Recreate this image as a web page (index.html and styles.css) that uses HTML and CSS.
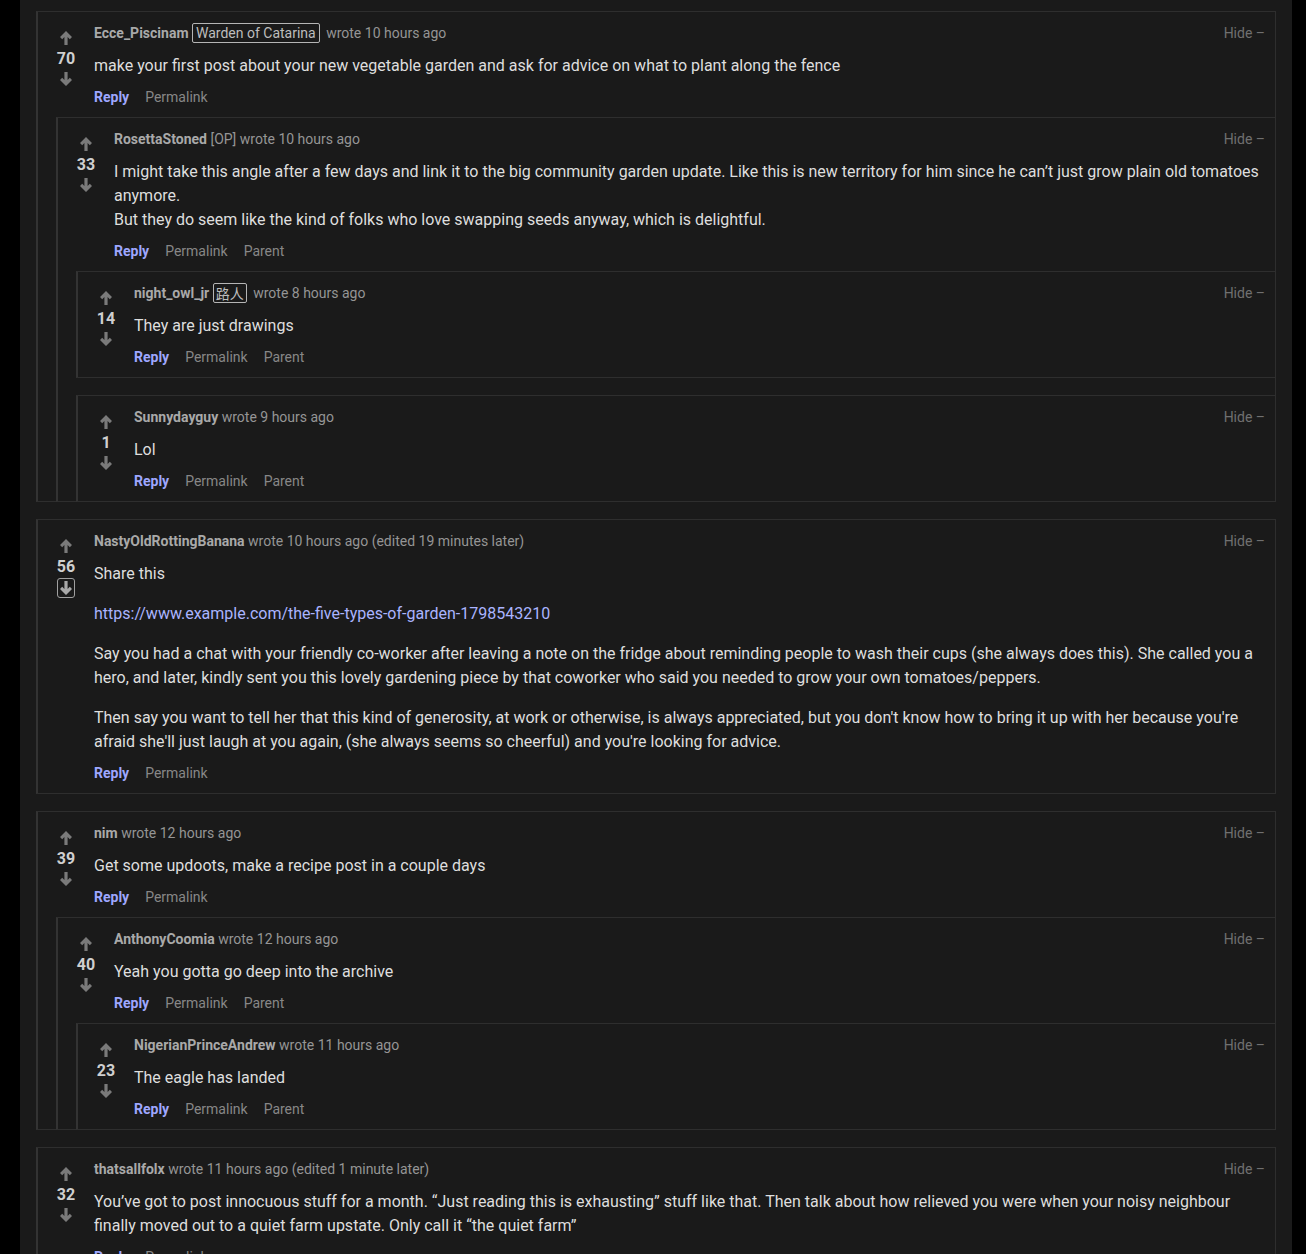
FILE: index.html
```html
<!DOCTYPE html>
<html lang="en">
<head>
<meta charset="utf-8">
<title>Comments</title>
<link rel="stylesheet" href="styles.css">
</head>
<body>
<main class="panel">

  <!-- thread 1 -->
  <div class="comment">
    <div class="c-main">
      <div class="vote">
        <svg class="arrow" viewBox="0 0 12 14"><path d="M6 0L12 6L9.8 8.2L7.6 5.9V14H4.4V5.9L2.2 8.2L0 6Z"/></svg>
        <span class="score">70</span>
        <svg class="arrow down" viewBox="0 0 12 14"><path d="M6 14L12 8L9.8 5.8L7.6 8.1V0H4.4V8.1L2.2 5.8L0 8Z"/></svg>
      </div>
      <div class="c-body">
        <div class="meta"><span><b class="user">Ecce_Piscinam</b> <span class="flair">Warden of Catarina</span> wrote 10 hours ago</span><span class="hide">Hide –</span></div>
        <div class="text"><p>make your first post about your new vegetable garden and ask for advice on what to plant along the fence</p></div>
        <div class="actions"><a class="reply">Reply</a><a>Permalink</a></div>
      </div>
    </div>
    <div class="children">
      <div class="comment">
        <div class="c-main">
          <div class="vote">
            <svg class="arrow" viewBox="0 0 12 14"><path d="M6 0L12 6L9.8 8.2L7.6 5.9V14H4.4V5.9L2.2 8.2L0 6Z"/></svg>
            <span class="score">33</span>
            <svg class="arrow down" viewBox="0 0 12 14"><path d="M6 14L12 8L9.8 5.8L7.6 8.1V0H4.4V8.1L2.2 5.8L0 8Z"/></svg>
          </div>
          <div class="c-body">
            <div class="meta"><span><b class="user">RosettaStoned</b> [OP] wrote 10 hours ago</span><span class="hide">Hide –</span></div>
            <div class="text"><p>I might take this angle after a few days and link it to the big community garden update. Like this is new territory for him since he can’t just grow plain old tomatoes<br>anymore.<br>But they do seem like the kind of folks who love swapping seeds anyway, which is delightful.</p></div>
            <div class="actions"><a class="reply">Reply</a><a>Permalink</a><a>Parent</a></div>
          </div>
        </div>
        <div class="children">
          <div class="comment">
            <div class="c-main">
              <div class="vote">
                <svg class="arrow" viewBox="0 0 12 14"><path d="M6 0L12 6L9.8 8.2L7.6 5.9V14H4.4V5.9L2.2 8.2L0 6Z"/></svg>
                <span class="score">14</span>
                <svg class="arrow down" viewBox="0 0 12 14"><path d="M6 14L12 8L9.8 5.8L7.6 8.1V0H4.4V8.1L2.2 5.8L0 8Z"/></svg>
              </div>
              <div class="c-body">
                <div class="meta"><span><b class="user">night_owl_jr</b> <span class="flair cjk">路人</span> wrote 8 hours ago</span><span class="hide">Hide –</span></div>
                <div class="text"><p>They are just drawings</p></div>
                <div class="actions"><a class="reply">Reply</a><a>Permalink</a><a>Parent</a></div>
              </div>
            </div>
          </div>
          <div class="comment">
            <div class="c-main">
              <div class="vote">
                <svg class="arrow" viewBox="0 0 12 14"><path d="M6 0L12 6L9.8 8.2L7.6 5.9V14H4.4V5.9L2.2 8.2L0 6Z"/></svg>
                <span class="score">1</span>
                <svg class="arrow down" viewBox="0 0 12 14"><path d="M6 14L12 8L9.8 5.8L7.6 8.1V0H4.4V8.1L2.2 5.8L0 8Z"/></svg>
              </div>
              <div class="c-body">
                <div class="meta"><span><b class="user">Sunnydayguy</b> wrote 9 hours ago</span><span class="hide">Hide –</span></div>
                <div class="text"><p>Lol</p></div>
                <div class="actions"><a class="reply">Reply</a><a>Permalink</a><a>Parent</a></div>
              </div>
            </div>
          </div>
        </div>
      </div>
    </div>
  </div>

  <!-- thread 2 -->
  <div class="comment">
    <div class="c-main">
      <div class="vote">
        <svg class="arrow" viewBox="0 0 12 14"><path d="M6 0L12 6L9.8 8.2L7.6 5.9V14H4.4V5.9L2.2 8.2L0 6Z"/></svg>
        <span class="score">56</span>
        <span class="voted"><svg class="arrow down" viewBox="0 0 12 14"><path d="M6 14L12 8L9.8 5.8L7.6 8.1V0H4.4V8.1L2.2 5.8L0 8Z"/></svg></span>
      </div>
      <div class="c-body">
        <div class="meta"><span><b class="user">NastyOldRottingBanana</b> wrote 10 hours ago (edited 19 minutes later)</span><span class="hide">Hide –</span></div>
        <div class="text">
          <p>Share this</p>
          <p><a class="link">https://www.example.com/the-five-types-of-garden-1798543210</a></p>
          <p>Say you had a chat with your friendly co-worker after leaving a note on the fridge about reminding people to wash their cups (she always does this). She called you a hero, and later, kindly sent you this lovely gardening piece by that coworker who said you needed to grow your own tomatoes/peppers.</p>
          <p>Then say you want to tell her that this kind of generosity, at work or otherwise, is always appreciated, but you don't know how to bring it up with her because you're afraid she'll just laugh at you again, (she always seems so cheerful) and you're looking for advice.</p>
        </div>
        <div class="actions"><a class="reply">Reply</a><a>Permalink</a></div>
      </div>
    </div>
  </div>

  <!-- thread 3 -->
  <div class="comment">
    <div class="c-main">
      <div class="vote">
        <svg class="arrow" viewBox="0 0 12 14"><path d="M6 0L12 6L9.8 8.2L7.6 5.9V14H4.4V5.9L2.2 8.2L0 6Z"/></svg>
        <span class="score">39</span>
        <svg class="arrow down" viewBox="0 0 12 14"><path d="M6 14L12 8L9.8 5.8L7.6 8.1V0H4.4V8.1L2.2 5.8L0 8Z"/></svg>
      </div>
      <div class="c-body">
        <div class="meta"><span><b class="user">nim</b> wrote 12 hours ago</span><span class="hide">Hide –</span></div>
        <div class="text"><p>Get some updoots, make a recipe post in a couple days</p></div>
        <div class="actions"><a class="reply">Reply</a><a>Permalink</a></div>
      </div>
    </div>
    <div class="children">
      <div class="comment">
        <div class="c-main">
          <div class="vote">
            <svg class="arrow" viewBox="0 0 12 14"><path d="M6 0L12 6L9.8 8.2L7.6 5.9V14H4.4V5.9L2.2 8.2L0 6Z"/></svg>
            <span class="score">40</span>
            <svg class="arrow down" viewBox="0 0 12 14"><path d="M6 14L12 8L9.8 5.8L7.6 8.1V0H4.4V8.1L2.2 5.8L0 8Z"/></svg>
          </div>
          <div class="c-body">
            <div class="meta"><span><b class="user">AnthonyCoomia</b> wrote 12 hours ago</span><span class="hide">Hide –</span></div>
            <div class="text"><p>Yeah you gotta go deep into the archive</p></div>
            <div class="actions"><a class="reply">Reply</a><a>Permalink</a><a>Parent</a></div>
          </div>
        </div>
        <div class="children">
          <div class="comment">
            <div class="c-main">
              <div class="vote">
                <svg class="arrow" viewBox="0 0 12 14"><path d="M6 0L12 6L9.8 8.2L7.6 5.9V14H4.4V5.9L2.2 8.2L0 6Z"/></svg>
                <span class="score">23</span>
                <svg class="arrow down" viewBox="0 0 12 14"><path d="M6 14L12 8L9.8 5.8L7.6 8.1V0H4.4V8.1L2.2 5.8L0 8Z"/></svg>
              </div>
              <div class="c-body">
                <div class="meta"><span><b class="user">NigerianPrinceAndrew</b> wrote 11 hours ago</span><span class="hide">Hide –</span></div>
                <div class="text"><p>The eagle has landed</p></div>
                <div class="actions"><a class="reply">Reply</a><a>Permalink</a><a>Parent</a></div>
              </div>
            </div>
          </div>
        </div>
      </div>
    </div>
  </div>

  <!-- thread 4 -->
  <div class="comment">
    <div class="c-main">
      <div class="vote">
        <svg class="arrow" viewBox="0 0 12 14"><path d="M6 0L12 6L9.8 8.2L7.6 5.9V14H4.4V5.9L2.2 8.2L0 6Z"/></svg>
        <span class="score">32</span>
        <svg class="arrow down" viewBox="0 0 12 14"><path d="M6 14L12 8L9.8 5.8L7.6 8.1V0H4.4V8.1L2.2 5.8L0 8Z"/></svg>
      </div>
      <div class="c-body">
        <div class="meta"><span><b class="user">thatsallfolx</b> wrote 11 hours ago (edited 1 minute later)</span><span class="hide">Hide –</span></div>
        <div class="text"><p>You’ve got to post innocuous stuff for a month. “Just reading this is exhausting” stuff like that. Then talk about how relieved you were when your noisy neighbour finally moved out to a quiet farm upstate. Only call it “the quiet farm”</p></div>
        <div class="actions"><a class="reply">Reply</a><a>Permalink</a></div>
      </div>
    </div>
  </div>

</main>
</body>
</html>
```

FILE: styles.css
```css
html, body {
  margin: 0;
  padding: 0;
  background: #000;
}

body {
  font-family: Roboto, "Noto Sans", "Noto Sans CJK SC", sans-serif;
  color: #dcdcdc;
}

.panel {
  margin-left: 20px;
  width: 1272px;
  min-height: 1254px;
  box-sizing: border-box;
  background: #1a1a1a;
  padding: 11px 16px 16px 16px;
}

.comment {
  border: 1px solid #2e2e2e;
  border-left: 2px solid #333;
  background: #1a1a1a;
}

.comment + .comment {
  margin-top: 17px;
}

.c-main {
  display: flex;
  padding: 11px 10px 10px 8px;
}

.vote {
  flex: 0 0 40px;
  margin-right: 8px;
  display: flex;
  flex-direction: column;
  align-items: center;
  padding-top: 8px;
}

.arrow {
  width: 12px;
  height: 14px;
  fill: #7a7a7a;
  display: block;
}

.arrow.down {
  margin-top: 3px;
}

.score {
  font-size: 16px;
  line-height: 20px;
  font-weight: 700;
  color: #cfcfcf;
  margin-top: 4px;
}

.voted {
  margin-top: 1px;
  width: 16px;
  height: 18px;
  border: 1.5px solid #a0a0a0;
  border-radius: 3px;
  display: flex;
  align-items: center;
  justify-content: center;
}

.voted .arrow.down {
  margin-top: 0;
  fill: #a8a8a8;
}

.c-body {
  flex: 1;
  min-width: 0;
}

.meta {
  display: flex;
  justify-content: space-between;
  font-size: 14px;
  line-height: 20px;
  height: 20px;
  color: #959595;
}

.user {
  color: #a9a9a9;
  font-weight: 700;
}

.flair {
  display: inline-block;
  vertical-align: top;
  border: 1px solid #b5b5b5;
  border-radius: 2px;
  padding: 0 3px;
  line-height: 18px;
  height: 18px;
  color: #bdbdbd;
  margin-right: 3px;
}

.flair.cjk {
  font-family: "Noto Sans CJK SC", sans-serif;
  padding: 0 2px;
}

.hide {
  color: #707070;
}

.text {
  margin-top: 11px;
  font-size: 16px;
  line-height: 24px;
  color: #dedede;
}

.text p {
  margin: 0;
}

.text p + p {
  margin-top: 16px;
}

.link {
  color: #aab4ff;
}

.actions {
  margin-top: 9px;
  display: flex;
  gap: 16px;
  font-size: 14px;
  line-height: 20px;
}

.actions a {
  color: #878787;
}

.actions a.reply {
  color: #9ea7ff;
  font-weight: 700;
}

.children {
  margin-left: 18px;
  margin-right: -1px;
  margin-bottom: -1px;
}
```
